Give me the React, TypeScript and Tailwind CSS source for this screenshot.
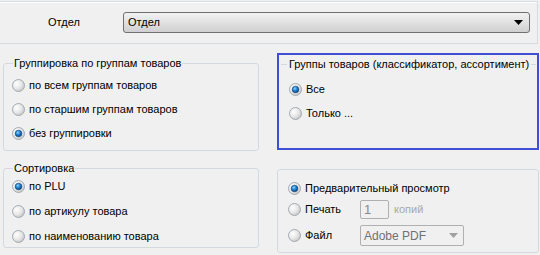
import React from 'react';

const Radio: React.FC<{ checked?: boolean }> = ({ checked }) => (
  <svg width="13" height="13" viewBox="0 0 13 13" className="shrink-0">
    <defs>
      <radialGradient id="rg-off" cx="0.35" cy="0.35" r="0.7">
        <stop offset="0" stopColor="#ffffff" />
        <stop offset="0.6" stopColor="#e6e6e6" />
        <stop offset="1" stopColor="#c4c4c4" />
      </radialGradient>
      <radialGradient id="rg-dot" cx="0.4" cy="0.35" r="0.7">
        <stop offset="0" stopColor="#8fd3ff" />
        <stop offset="0.5" stopColor="#1c7fd0" />
        <stop offset="1" stopColor="#0a3f7c" />
      </radialGradient>
    </defs>
    <circle cx="6.5" cy="6.5" r="6" fill="url(#rg-off)" stroke="#a3abb2" strokeWidth="1" />
    {checked && <circle cx="6.5" cy="6.5" r="3.3" fill="url(#rg-dot)" stroke="#0f3b6a" strokeWidth="0.6" />}
  </svg>
);

const Option: React.FC<{ label: string; checked?: boolean; className?: string }> = ({ label, checked, className }) => (
  <div className={`flex items-center gap-[4px] h-[13px] ${className || ''}`}>
    <Radio checked={checked} />
    <span className="leading-none">{label}</span>
  </div>
);

const Arrow: React.FC<{ color?: string }> = ({ color = '#000' }) => (
  <svg width="9" height="5" viewBox="0 0 9 5"><path d="M0 0h9L4.5 5z" fill={color} /></svg>
);

export default function App() {
  return (
    <div className="w-[540px] h-[255px] bg-[#f0f0f0] text-[11px] text-black overflow-hidden" style={{ fontFamily: '"Liberation Sans", Arial, sans-serif' }}>
      {/* top panel */}
      <div className="mt-[1px] mr-[2px] h-[43px] border-t border-b border-r border-[#d6dbe0] shadow-[inset_0_1px_0_#fff] flex items-center">
        <span className="ml-[48px] w-[75px]">Отдел</span>
        <div className="w-[407px] h-[21px] rounded-[3px] border border-[#707070] bg-gradient-to-b from-[#f2f2f2] to-[#d0d0d0] flex items-center justify-between pl-[4px] pr-[6px]">
          <span>Отдел</span>
          <Arrow />
        </div>
      </div>

      <div className="grid grid-cols-[256px_262px] gap-x-[18px] ml-[3px]">
        {/* grouping */}
        <fieldset className="mt-[13px] h-[94px] border border-[#d3d9de] rounded-[3px] px-[6px]">
          <legend className="ml-[3px] px-[1px] leading-[13px]">Группировка по группам товаров</legend>
          <div className="flex flex-col gap-[11px] mt-[9px] ml-[2px]">
            <Option label="по всем группам товаров" />
            <Option label="по старшим группам товаров" />
            <Option label="без группировки" checked />
          </div>
        </fieldset>

        {/* goods groups (focused) */}
        <div className="mt-[9px] h-[97px] border-2 border-[#3f50d6]">
          <div className="flex items-center mt-[3px] ml-[2px] mr-[1px]">
            <div className="w-[6px] h-px bg-[#d3d9de]" />
            <span className="px-[2px] leading-[13px]">Группы товаров (классификатор, ассортимент)</span>
            <div className="flex-1 h-px bg-[#d3d9de]" />
          </div>
          <div className="flex flex-col gap-[11px] mt-[12px] ml-[10px]">
            <Option label="Все" checked />
            <Option label="Только ..." />
          </div>
        </div>

        {/* sorting */}
        <fieldset className="mt-[11px] h-[86px] border border-[#d3d9de] rounded-[3px] px-[6px]">
          <legend className="ml-[3px] px-[1px] leading-[13px]">Сортировка</legend>
          <div className="flex flex-col gap-[12px] mt-[5px] ml-[2px]">
            <Option label="по PLU" checked />
            <Option label="по артикулу товара" />
            <Option label="по наименованию товара" />
          </div>
        </fieldset>

        {/* output */}
        <div className="mt-[18px] h-[84px] border border-[#d3d9de] rounded-[3px] pl-[10px] pt-[12px]">
          <Option label="Предварительный просмотр" checked />
          <div className="flex items-center mt-[5px] h-[19px]">
            <div className="w-[72px]"><Option label="Печать" /></div>
            <div className="w-[29px] h-[19px] border border-[#b0b0b0] rounded-[2px] bg-[#f0f0f0] text-[#8a8a8a] text-[13px] leading-[17px] pl-[3px]">1</div>
            <span className="ml-[5px] text-[#a8a8a8]">копий</span>
          </div>
          <div className="flex items-center mt-[6px] h-[21px]">
            <div className="w-[72px]"><Option label="Файл" /></div>
            <div className="w-[104px] h-[21px] border border-[#b0b0b0] rounded-[2px] flex items-center justify-between pl-[3px] pr-[5px] text-[#707070] text-[12px]">
              <span>Adobe PDF</span>
              <Arrow color="#a0a0a0" />
            </div>
          </div>
        </div>
      </div>
    </div>
  );
}
